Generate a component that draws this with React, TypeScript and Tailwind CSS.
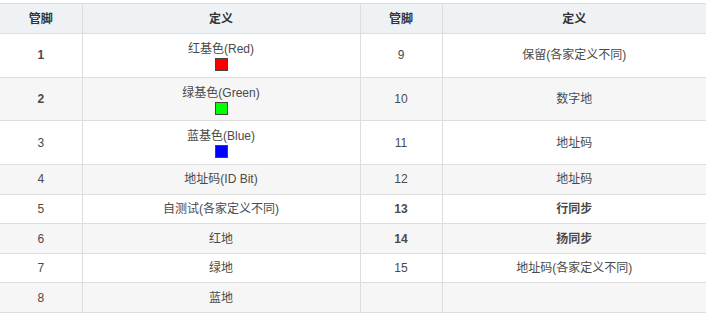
import React from "react";

type Cell = { text: string; bold?: boolean; swatch?: string };
type Row = { a: string; aBold?: boolean; ad: Cell; b: string; bd: Cell; tall?: boolean };

const rows: Row[] = [
  { a: "1", aBold: true, ad: { text: "红基色(Red)", swatch: "#ff0000" }, b: "9", bd: { text: "保留(各家定义不同)" }, tall: true },
  { a: "2", aBold: true, ad: { text: "绿基色(Green)", swatch: "#00ff00" }, b: "10", bd: { text: "数字地" }, tall: true },
  { a: "3", ad: { text: "蓝基色(Blue)", swatch: "#0000ff" }, b: "11", bd: { text: "地址码" }, tall: true },
  { a: "4", ad: { text: "地址码(ID Bit)" }, b: "12", bd: { text: "地址码" } },
  { a: "5", ad: { text: "自测试(各家定义不同)" }, b: "13", bd: { text: "行同步", bold: true } },
  { a: "6", ad: { text: "红地" }, b: "14", bd: { text: "扬同步", bold: true } },
  { a: "7", ad: { text: "绿地" }, b: "15", bd: { text: "地址码(各家定义不同)" } },
  { a: "8", ad: { text: "蓝地" }, b: "", bd: { text: "" } },
];

function Def({ c }: { c: Cell }) {
  return (
    <div className="flex flex-col items-center">
      <span className={c.bold ? "font-bold" : ""}>{c.text}</span>
      {c.swatch && (
        <span
          className="block w-[13px] h-[13px] border border-[#444]"
          style={{ backgroundColor: c.swatch }}
        />
      )}
    </div>
  );
}

export default function App() {
  const td = "border border-[#dddddd] text-center align-middle p-0";
  return (
    <div
      className="w-[706px] h-[313px] bg-white pt-[3px] overflow-hidden"
      style={{ fontFamily: '"Liberation Sans", "Noto Sans CJK SC", sans-serif' }}
    >
      <table className="w-[706px] border-collapse text-[12px] leading-[18px] text-[#4a4a4a] table-fixed">
        <colgroup>
          <col className="w-[82px]" />
          <col className="w-[278px]" />
          <col className="w-[82px]" />
          <col />
        </colgroup>
        <thead>
          <tr className="bg-[#eff2f5] h-[30px]">
            <th className={`${td} border-l-0 font-bold text-[#333]`}>管脚</th>
            <th className={`${td} font-bold text-[#333]`}>定义</th>
            <th className={`${td} font-bold text-[#333]`}>管脚</th>
            <th className={`${td} border-r-0 font-bold text-[#333]`}>定义</th>
          </tr>
        </thead>
        <tbody>
          {rows.map((r, i) => (
            <tr
              key={i}
              className={`${i % 2 === 1 ? "bg-[#f6f6f6]" : "bg-white"} ${r.tall ? "h-[43.7px]" : "h-[29.6px]"}`}
            >
              <td className={`${td} border-l-0 ${r.aBold ? "font-bold" : ""}`}>{r.a}</td>
              <td className={td}>
                <Def c={r.ad} />
              </td>
              <td className={`${td} ${r.bd.bold ? "font-bold" : ""}`}>{r.b}</td>
              <td className={`${td} border-r-0`}>
                <Def c={r.bd} />
              </td>
            </tr>
          ))}
        </tbody>
      </table>
    </div>
  );
}
